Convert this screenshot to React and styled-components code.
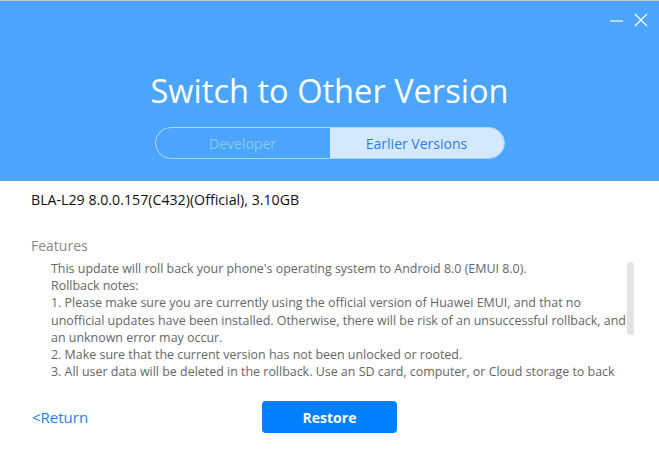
import React from 'react'
import styled, { createGlobalStyle } from 'styled-components'

const Global = createGlobalStyle`
  html, body {
    margin: 0;
    padding: 0;
    background: #fff;
  }
  body {
    font-family: "Open Sans", "Noto Sans", Arial, sans-serif;
  }
`

const Window = styled.div`
  width: 659px;
  height: 456px;
  display: flex;
  flex-direction: column;
  overflow: hidden;
  background: #fff;
`

const Header = styled.div`
  height: 180px;
  flex-shrink: 0;
  background: #4ba5fd;
  border-top: 1px solid #c8c8c8;
  position: relative;
  display: flex;
  flex-direction: column;
  align-items: center;
`

const WinControls = styled.div`
  position: absolute;
  top: 12px;
  right: 11px;
  display: flex;
  align-items: center;
  gap: 11px;
`

const Title = styled.h1`
  margin: 68px 0 0;
  font-weight: 400;
  font-size: 32.6px;
  line-height: 44px;
  color: #fff;
`

const Toggle = styled.div`
  margin-top: 14px;
  width: 350px;
  height: 32px;
  display: flex;
  border: 1px solid rgba(255, 255, 255, 0.55);
  border-radius: 17px;
  overflow: hidden;
  box-sizing: border-box;
`

const Tab = styled.div`
  flex: 1;
  display: flex;
  align-items: center;
  justify-content: center;
  font-size: 14px;
  background: ${p => (p.active ? '#d5e9fe' : 'transparent')};
  color: ${p => (p.active ? '#2a7fe6' : '#86c8e6')};
`

const Body = styled.div`
  display: flex;
  flex-direction: column;
  padding-left: 31px;
`

const VersionLine = styled.div`
  margin-top: 9px;
  font-size: 14.2px;
  line-height: 20px;
  color: #111;
`

const SectionTitle = styled.div`
  margin-top: 26px;
  font-size: 14px;
  line-height: 20px;
  color: #888;
`

const NotesArea = styled.div`
  position: relative;
  margin-top: 4px;
  height: 119px;
  overflow: hidden;
`

const Notes = styled.div`
  padding-left: 20px;
  font-size: 12.45px;
  line-height: 17.2px;
  color: #666;
  white-space: nowrap;
`

const Scrollbar = styled.div`
  position: absolute;
  top: 2px;
  right: 25px;
  width: 7px;
  height: 73px;
  border-radius: 4px;
  background: #e3e3e3;
`

const Footer = styled.div`
  margin-top: 22px;
  height: 32px;
  display: flex;
  align-items: center;
  padding-left: 32px;
`

const ReturnLink = styled.a`
  width: 230px;
  font-size: 15px;
  color: #1a82f7;
  text-decoration: none;
  cursor: pointer;
`

const RestoreButton = styled.button`
  width: 135px;
  height: 32px;
  border: none;
  border-radius: 4px;
  background: #0080ff;
  color: #fff;
  font-family: inherit;
  font-weight: 700;
  font-size: 14px;
  cursor: pointer;
`

const lines = [
  "This update will roll back your phone's operating system to Android 8.0 (EMUI 8.0).",
  'Rollback notes:',
  '1. Please make sure you are currently using the official version of Huawei EMUI, and that no',
  'unofficial updates have been installed. Otherwise, there will be risk of an unsuccessful rollback, and',
  'an unknown error may occur.',
  '2. Make sure that the current version has not been unlocked or rooted.',
  '3. All user data will be deleted in the rollback. Use an SD card, computer, or Cloud storage to back',
  'up your data before rolling back.',
]

export default function App() {
  return (
    <>
      <Global />
      <Window>
        <Header>
          <WinControls>
            <svg width="13" height="13" viewBox="0 0 13 13">
              <line x1="0" y1="7" x2="13" y2="7" stroke="#fff" strokeWidth="1.2" />
            </svg>
            <svg width="14" height="14" viewBox="0 0 14 14">
              <path d="M1 1 L13 13 M13 1 L1 13" stroke="#fff" strokeWidth="1.3" />
            </svg>
          </WinControls>
          <Title>Switch to Other Version</Title>
          <Toggle>
            <Tab>Developer</Tab>
            <Tab active>Earlier Versions</Tab>
          </Toggle>
        </Header>
        <Body>
          <VersionLine>BLA-L29 8.0.0.157(C432)(Official), 3.10GB</VersionLine>
          <SectionTitle>Features</SectionTitle>
          <NotesArea>
            <Notes>
              {lines.map((l, i) => (
                <div key={i}>{l}</div>
              ))}
            </Notes>
            <Scrollbar />
          </NotesArea>
        </Body>
        <Footer>
          <ReturnLink>&lt;Return</ReturnLink>
          <RestoreButton>Restore</RestoreButton>
        </Footer>
      </Window>
    </>
  )
}
